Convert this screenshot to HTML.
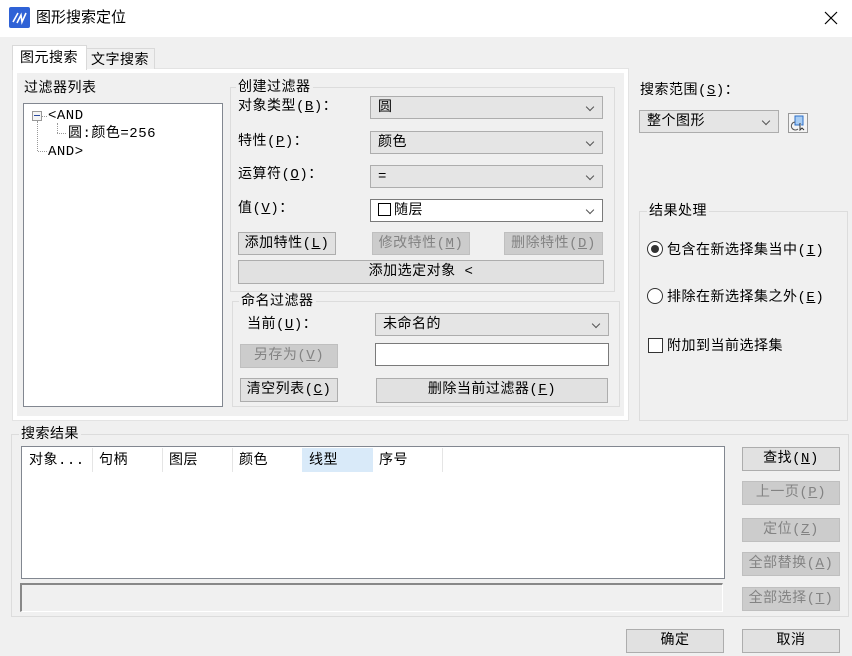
<!DOCTYPE html>
<html><head><meta charset="utf-8"><style>
*{box-sizing:border-box;margin:0;padding:0}
body{width:852px;height:656px;background:#f0f0f0;position:relative;overflow:hidden;font-family:"Liberation Mono","Noto Sans CJK SC","WenQuanYi Zen Hei",monospace;font-size:14px;letter-spacing:0.5px;color:#000}
.a{position:absolute;white-space:nowrap;line-height:18px;padding-top:2px}
.box{position:absolute}
.btn{position:absolute;background:#e1e1e1;border:1px solid #adadad;text-align:center;line-height:23px;font-size:14px}
.dis{background:#cccccc;border-color:#bfbfbf;color:#838383}
.cb{position:absolute;background:#e5e5e5;border:1px solid #adadad;padding-left:7px;line-height:23px}
.cb:after{content:"";position:absolute;right:9px;top:7px;width:5px;height:5px;border-right:1px solid #555;border-bottom:1px solid #555;transform:rotate(45deg)}
.grp{position:absolute;border:1px solid #dcdcdc}
.gl{position:absolute;background:#f0f0f0;padding:2px 2px 0;line-height:16px}
u{text-decoration:underline}
</style></head><body>
<div class="box" style="left:0;top:0;width:852px;height:37px;background:#fff"></div>
<svg class="box" style="left:9px;top:7px" width="21" height="21"><rect width="21" height="21" rx="2" fill="#2f62d6"/><path d="M4 15 L9 6 M8 16 L12 8 L13 15 L17 6" stroke="#fff" stroke-width="1.6" fill="none"/></svg>
<div class="a" style="left:36px;top:8px;font-size:15px;letter-spacing:0">图形搜索定位</div>
<svg class="box" style="left:824px;top:11px" width="14" height="14"><path d="M1 1L13 13M13 1L1 13" stroke="#000" stroke-width="1.2"/></svg>

<div class="box" style="left:12px;top:68px;width:617px;height:353px;background:#fff;border:1px solid #e3e3e3"></div>
<div class="box" style="left:17px;top:73px;width:607px;height:343px;background:#f0f0f0"></div>
<div class="box" style="left:86px;top:48px;width:69px;height:21px;background:#f0f0f0;border:1px solid #d9d9d9;border-bottom:none"></div>
<div class="a" style="left:91px;top:50px">文字搜索</div>
<div class="box" style="left:12px;top:45px;width:75px;height:25px;background:#fff;border:1px solid #d9d9d9;border-bottom:none"></div>
<div class="a" style="left:20px;top:48px">图元搜索</div>

<div class="a" style="left:24px;top:78px">过滤器列表</div>
<div class="box" style="left:23px;top:103px;width:200px;height:304px;background:#fff;border:1px solid #828790"></div>
<div class="box" style="left:32px;top:111px;width:10px;height:10px;border:1px solid #999;background:#f4f4f4"></div>
<div class="box" style="left:34px;top:115px;width:6px;height:1px;background:#2a4aa0"></div>
<div class="box" style="left:37px;top:121px;width:0;height:30px;border-left:1px dotted #999"></div>
<div class="box" style="left:42px;top:116px;width:5px;border-top:1px dotted #999"></div>
<div class="box" style="left:38px;top:151px;width:9px;border-top:1px dotted #999"></div>
<div class="box" style="left:57px;top:123px;width:0;height:10px;border-left:1px dotted #999"></div>
<div class="box" style="left:57px;top:133px;width:9px;border-top:1px dotted #999"></div>
<div class="a" style="left:48px;top:105px">&lt;AND</div>
<div class="a" style="left:68px;top:123px">圆:颜色=256</div>
<div class="a" style="left:48px;top:141px">AND&gt;</div>

<div class="grp" style="left:230px;top:87px;width:385px;height:205px"></div>
<div class="gl" style="left:236px;top:78px">创建过滤器</div>
<div class="a" style="left:238px;top:96px">对象类型(<u>B</u>)：</div>
<div class="cb" style="left:370px;top:96px;width:233px;height:23px">圆</div>
<div class="a" style="left:238px;top:131px">特性(<u>P</u>)：</div>
<div class="cb" style="left:370px;top:131px;width:233px;height:23px">颜色</div>
<div class="a" style="left:238px;top:164px">运算符(<u>O</u>)：</div>
<div class="cb" style="left:370px;top:165px;width:233px;height:23px">=</div>
<div class="a" style="left:238px;top:198px">值(<u>V</u>)：</div>
<div class="cb" style="left:370px;top:199px;width:233px;height:23px;background:#fff;border-color:#7a7a7a"><span style="display:inline-block;width:13px;height:13px;border:1px solid #000;vertical-align:-2px;margin-right:3px"></span>随层</div>
<div class="btn" style="left:238px;top:232px;width:98px;height:23px">添加特性(<u>L</u>)</div>
<div class="btn dis" style="left:372px;top:232px;width:98px;height:23px">修改特性(<u>M</u>)</div>
<div class="btn dis" style="left:504px;top:232px;width:99px;height:23px">删除特性(<u>D</u>)</div>
<div class="btn" style="left:238px;top:260px;width:366px;height:24px">添加选定对象 &lt;</div>

<div class="grp" style="left:232px;top:301px;width:388px;height:106px"></div>
<div class="gl" style="left:239px;top:292px">命名过滤器</div>
<div class="a" style="left:247px;top:314px">当前(<u>U</u>)：</div>
<div class="cb" style="left:375px;top:313px;width:234px;height:23px">未命名的</div>
<div class="btn dis" style="left:240px;top:344px;width:98px;height:24px">另存为(<u>V</u>)</div>
<div class="box" style="left:375px;top:343px;width:234px;height:23px;background:#fff;border:1px solid #7a7a7a"></div>
<div class="btn" style="left:240px;top:378px;width:98px;height:24px">清空列表(<u>C</u>)</div>
<div class="btn" style="left:376px;top:378px;width:232px;height:25px">删除当前过滤器(<u>F</u>)</div>

<div class="a" style="left:640px;top:80px">搜索范围(<u>S</u>)：</div>
<div class="cb" style="left:639px;top:110px;width:140px;height:23px">整个图形</div>
<div class="box" style="left:788px;top:113px;width:20px;height:20px;background:#f4f4f4;border:1px solid #999"></div>
<svg class="box" style="left:790px;top:115px" width="16" height="16"><rect x="5" y="1" width="8" height="9" fill="#a9cdf3" stroke="#2d6fc9"/><path d="M5 7 A4 4 0 1 0 8 14" stroke="#555" fill="none"/><path d="M10 8 L10 15 L12 13 L14 15" stroke="#333" fill="#fff"/></svg>

<div class="grp" style="left:639px;top:211px;width:209px;height:210px"></div>
<div class="gl" style="left:647px;top:202px">结果处理</div>
<div class="box" style="left:647px;top:241px;width:16px;height:16px;border-radius:50%;border:1px solid #333;background:#fff"></div>
<div class="box" style="left:651px;top:245px;width:8px;height:8px;border-radius:50%;background:#333"></div>
<div class="a" style="left:667px;top:240px">包含在新选择集当中(<u>I</u>)</div>
<div class="box" style="left:647px;top:288px;width:16px;height:16px;border-radius:50%;border:1px solid #333;background:#fff"></div>
<div class="a" style="left:667px;top:287px">排除在新选择集之外(<u>E</u>)</div>
<div class="box" style="left:648px;top:338px;width:15px;height:15px;border:1px solid #333;background:#fff"></div>
<div class="a" style="left:667px;top:336px">附加到当前选择集</div>

<div class="grp" style="left:11px;top:434px;width:838px;height:183px"></div>
<div class="gl" style="left:19px;top:425px">搜索结果</div>
<div class="box" style="left:21px;top:446px;width:704px;height:133px;background:#fff;border:1px solid #828790"></div>
<div class="box" style="left:302px;top:448px;width:71px;height:24px;background:#d9eaf9"></div>
<div class="box" style="left:92px;top:448px;width:1px;height:24px;background:#e5e5e5"></div>
<div class="box" style="left:162px;top:448px;width:1px;height:24px;background:#e5e5e5"></div>
<div class="box" style="left:232px;top:448px;width:1px;height:24px;background:#e5e5e5"></div>
<div class="box" style="left:442px;top:448px;width:1px;height:24px;background:#e5e5e5"></div>
<div class="a" style="left:29px;top:450px">对象...</div>
<div class="a" style="left:99px;top:450px">句柄</div>
<div class="a" style="left:169px;top:450px">图层</div>
<div class="a" style="left:239px;top:450px">颜色</div>
<div class="a" style="left:309px;top:450px">线型</div>
<div class="a" style="left:379px;top:450px">序号</div>
<div class="box" style="left:20px;top:583px;width:703px;height:29px;border-top:2px solid #888;border-left:2px solid #888;border-right:1px solid #fff;border-bottom:1px solid #fff"></div>

<div class="btn" style="left:742px;top:447px;width:98px;height:24px">查找(<u>N</u>)</div>
<div class="btn dis" style="left:742px;top:481px;width:98px;height:24px">上一页(<u>P</u>)</div>
<div class="btn dis" style="left:742px;top:518px;width:98px;height:24px">定位(<u>Z</u>)</div>
<div class="btn dis" style="left:742px;top:552px;width:98px;height:24px">全部替换(<u>A</u>)</div>
<div class="btn dis" style="left:742px;top:587px;width:98px;height:24px">全部选择(<u>T</u>)</div>
<div class="btn" style="left:626px;top:629px;width:98px;height:24px">确定</div>
<div class="btn" style="left:742px;top:629px;width:98px;height:24px">取消</div>
</body></html>
